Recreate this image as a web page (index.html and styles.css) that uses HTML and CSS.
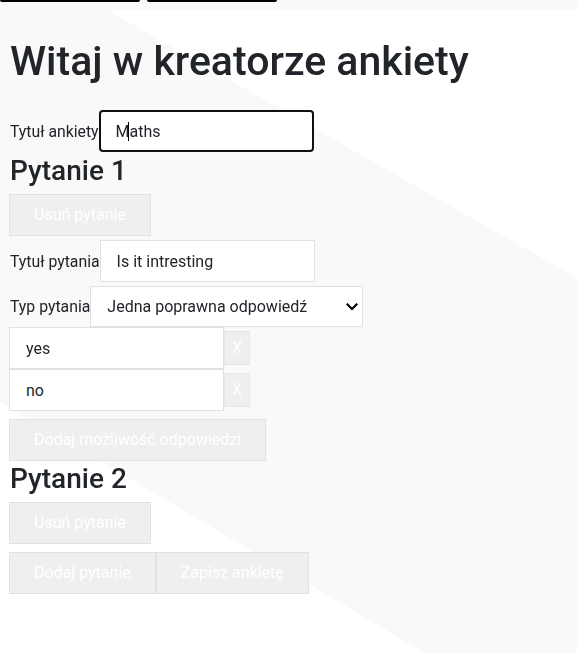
FILE: index.html
```html
<!DOCTYPE html>
<html lang="pl">
<head>
<meta charset="utf-8">
<title>Kreator ankiety</title>
<link rel="stylesheet" href="styles.css">
</head>
<body>
<div class="backdrop"></div>
<div class="topbar">
  <span class="tab tab-one"></span>
  <span class="tab tab-two"></span>
</div>
<main class="page">
  <h1 class="title">Witaj w kreatorze ankiety</h1>
  <div class="field">
    <label class="label" for="survey-title">Tytuł ankiety</label>
    <span class="focus-wrap">
      <input id="survey-title" class="input input-focused" value="Maths">
      <span class="caret"></span>
    </span>
  </div>

  <section class="question">
    <h2 class="question-title">Pytanie 1</h2>
    <button class="btn" disabled>Usuń pytanie</button>
    <div class="field field-spaced">
      <label class="label" for="q1-title">Tytuł pytania</label>
      <input id="q1-title" class="input" value="Is it intresting">
    </div>
    <div class="field field-spaced">
      <label class="label" for="q1-type">Typ pytania</label>
      <span class="select-wrap">
        <select id="q1-type" class="select">
          <option>Jedna poprawna odpowiedź</option>
        </select>
        <svg class="chevron" width="12" height="8" viewBox="0 0 12 8" aria-hidden="true">
          <path d="M1.5 1.5 L6 6 L10.5 1.5" fill="none" stroke="#000" stroke-width="2.2" stroke-linecap="square"/>
        </svg>
      </span>
    </div>
    <div class="answers">
      <div class="answer">
        <input class="input" value="yes">
        <button class="btn btn-x" disabled>X</button>
      </div>
      <div class="answer">
        <input class="input" value="no">
        <button class="btn btn-x" disabled>X</button>
      </div>
    </div>
    <button class="btn btn-add" disabled>Dodaj możliwość odpowiedzi</button>
  </section>

  <section class="question">
    <h2 class="question-title">Pytanie 2</h2>
    <button class="btn" disabled>Usuń pytanie</button>
  </section>

  <div class="actions">
    <button class="btn" disabled>Dodaj pytanie</button>
    <button class="btn" disabled>Zapisz ankietę</button>
  </div>
</main>
</body>
</html>
```

FILE: styles.css
```css
* {
  box-sizing: border-box;
}

html {
  background: #ffffff;
}

body {
  margin: 0;
  padding: 0;
  font-family: Roboto, "Liberation Sans", sans-serif;
  font-size: 16px;
  color: #212529;
  min-height: 653px;
}

.backdrop {
  position: fixed;
  inset: 0;
  z-index: -1;
  background: #f9f9f9;
  clip-path: polygon(0 10px, 107px 10px, 577px 278px, 577px 653px, 425px 653px, 0 402px);
}

.topbar {
  height: 10px;
  background: #f8f9fa;
  display: flex;
  gap: 7px;
  align-items: flex-start;
}

.tab {
  display: block;
  height: 2px;
  background: #000;
  border-radius: 0 0 3px 3px;
}

.tab-one {
  width: 140px;
}

.tab-two {
  width: 130px;
}

.page {
  padding: 0 9px;
}

.title {
  margin: 27px 0 25px 1px;
  font-size: 41px;
  font-weight: 500;
  line-height: 48px;
  color: #212529;
}

.field {
  display: flex;
  align-items: center;
}

.field-spaced {
  margin-top: 4px;
}

.label {
  font-size: 15.8px;
  color: #212529;
  padding-left: 1px;
}

.input {
  width: 215px;
  height: 42px;
  padding: 8px 16px;
  border: 1px solid #dee2e6;
  border-radius: 0;
  background: #fff;
  font-family: inherit;
  font-size: 16px;
  color: #212529;
}

.focus-wrap {
  position: relative;
  display: flex;
}

.input-focused {
  border: 2px solid #101010;
  border-radius: 4px;
  padding: 7px 15px;
  outline: none;
}

.caret {
  position: absolute;
  left: 29px;
  top: 12px;
  width: 1px;
  height: 19px;
  background: #000;
}

.question-title {
  margin: 2px 0 6px 1px;
  font-size: 28px;
  font-weight: 500;
  line-height: 34px;
  color: #212529;
}

.btn {
  display: inline-block;
  height: 42px;
  padding: 8px 24px;
  border: 1px solid #dee2e6;
  border-radius: 0;
  background: #efefef;
  color: #ffffff;
  font-family: inherit;
  font-size: 16px;
  line-height: 24px;
}

.select-wrap {
  position: relative;
  display: flex;
}

.select {
  appearance: none;
  -webkit-appearance: none;
  width: 273px;
  height: 41px;
  padding: 8px 40px 8px 16px;
  border: 1px solid #dee2e6;
  border-radius: 0;
  background: #fff;
  font-family: inherit;
  font-size: 16px;
  color: #212529;
}

.chevron {
  position: absolute;
  right: 5px;
  top: 17px;
  pointer-events: none;
}

.answers {
  display: flex;
  flex-direction: column;
}

.answer {
  display: flex;
  align-items: center;
}

.btn-x {
  height: 34px;
  padding: 4px 7px;
  border-color: #e6e6e6;
}

.btn-add {
  margin-top: 8px;
  margin-bottom: -1px;
}

.actions {
  display: flex;
  margin-top: 8px;
}
```
